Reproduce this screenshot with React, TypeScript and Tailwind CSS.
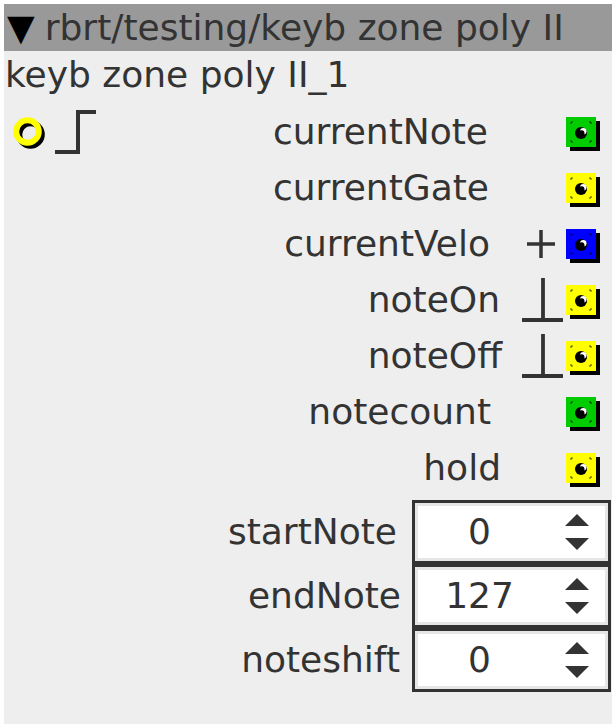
import React from "react";

const FONT = { fontFamily: '"DejaVu Sans", "Liberation Sans", sans-serif' };

function Connector({ color }: { color: string }) {
  return (
    <div className="pt-[4px]">
      <svg width="34" height="34" viewBox="0 0 34 34">
        <rect x="4" y="4" width="30" height="30" fill="#000" />
        <rect x="0" y="0" width="30" height="30" fill={color} />
        <path d="M5 7 V5 H7 M23 5 H25 V7 M25 23 V25 H23 M7 25 H5 V23" stroke="#000" strokeWidth="1" fill="none" opacity="0.7" />
        <circle cx="15" cy="16" r="6" fill="#000" />
        <circle cx="17.3" cy="14.3" r="3.2" fill="#fff" />
        <circle cx="15.6" cy="16.2" r="2.9" fill="#000" />
      </svg>
    </div>
  );
}

function Plus() {
  return (
    <svg width="28" height="28" viewBox="0 0 28 28">
      <path d="M0 14 H28 M14 0 V28" stroke="#333" strokeWidth="3.5" />
    </svg>
  );
}

function Tee() {
  return (
    <svg width="41" height="44" viewBox="0 0 41 44">
      <path d="M21 0 V42 M0 42 H41" stroke="#333" strokeWidth="3.8" />
    </svg>
  );
}

type RowDef = {
  label: string;
  mr: string;
  color: string;
  icon?: "plus" | "tee";
};

const rows: RowDef[] = [
  { label: "currentNote", mr: "mr-[30px]", color: "#00cc00" },
  { label: "currentGate", mr: "mr-[29px]", color: "#ffff00" },
  { label: "currentVelo", mr: "mr-[28px]", color: "#0000ff", icon: "plus" },
  { label: "noteOn", mr: "mr-[18px]", color: "#ffff00", icon: "tee" },
  { label: "noteOff", mr: "mr-[16px]", color: "#ffff00", icon: "tee" },
  { label: "notecount", mr: "mr-[27px]", color: "#00cc00" },
  { label: "hold", mr: "mr-[17px]", color: "#ffff00" },
];

function Spinner({ value }: { value: string }) {
  return (
    <div className="w-[199px] h-[64px] border-[3px] border-[#333333] bg-[#e6e6e6] p-[3px]">
      <div className="flex h-full items-center bg-white">
        <div className="flex-1 text-center leading-[42px]">{value}</div>
        <div className="flex w-[64px] flex-col items-center gap-[12px] pl-[7px]">
          <svg width="24" height="12" viewBox="0 0 24 12">
            <path d="M12 0 L24 12 H0 Z" fill="#333" />
          </svg>
          <svg width="24" height="12" viewBox="0 0 24 12">
            <path d="M0 0 H24 L12 12 Z" fill="#333" />
          </svg>
        </div>
      </div>
    </div>
  );
}

const spinners = [
  { label: "startNote", value: "0", mr: "mr-[15px]" },
  { label: "endNote", value: "127", mr: "mr-[11px]" },
  { label: "noteshift", value: "0", mr: "mr-[12px]" },
];

export default function App() {
  return (
    <div className="w-[616px] h-[728px] bg-white pt-[4px] pl-[4px] text-[36px] text-[#333333]" style={FONT}>
      <div className="w-[608px] h-[720px] bg-[#eeeeee] overflow-hidden">
        <div className="flex h-[47px] items-center bg-[#999999] leading-[47px] whitespace-nowrap">
          <span className="ml-[3px] mr-[10px] text-black">▼</span>
          <span>rbrt/testing/keyb zone poly II</span>
        </div>
        <div className="h-[47px] pl-[1px] leading-[47px] whitespace-nowrap">keyb zone poly II_1</div>
        <div className="mt-[6px] flex flex-col">
          {rows.map((r, i) => (
            <div key={r.label} className="flex h-[56px] items-center">
              {i === 0 ? (
                <svg width="96" height="46" viewBox="0 0 96 46" className="mt-[2px]">
                  <circle cx="26.5" cy="24.5" r="11.3" stroke="#000" strokeWidth="6" fill="none" />
                  <circle cx="23.5" cy="21.5" r="11.3" stroke="#ffff00" strokeWidth="6" fill="none" />
                  <path d="M51 42 H74 V2 H92" stroke="#333" strokeWidth="4" fill="none" />
                </svg>
              ) : null}
              <div className="flex-1" />
              <span className={`leading-[42px] whitespace-nowrap ${r.mr}`}>{r.label}</span>
              <div className="flex w-[48px] items-center">
                {r.icon === "plus" ? (
                  <div className="ml-[9px]">
                    <Plus />
                  </div>
                ) : null}
                {r.icon === "tee" ? (
                  <div className="ml-[4px]">
                    <Tee />
                  </div>
                ) : null}
              </div>
              <div className="mr-[12px]">
                <Connector color={r.color} />
              </div>
            </div>
          ))}
        </div>
        <div className="mt-[4px] flex flex-col">
          {spinners.map((s) => (
            <div key={s.label} className="flex items-center justify-end pr-[1px]">
              <span className={`leading-[42px] ${s.mr}`}>{s.label}</span>
              <Spinner value={s.value} />
            </div>
          ))}
        </div>
      </div>
    </div>
  );
}
